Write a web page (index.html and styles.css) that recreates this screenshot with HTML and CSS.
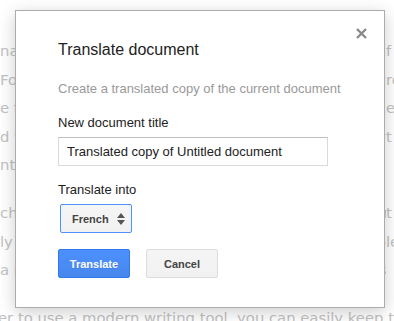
FILE: index.html
```html
<!DOCTYPE html>
<html lang="en">
<head>
  <meta charset="UTF-8">
  <title>Translate document</title>
  <link rel="stylesheet" href="styles.css">
</head>
<body>
  <!-- Document text behind the dialog -->
  <div class="doc">
    <p>
      <span class="line"><span class="start">nal document stays the same and a new copy is made. I</span><span class="end">f it</span></span>
      <span class="line"><span class="start"> For each language you pick, a copy is saved to your Drive. F</span><span class="end">rom</span></span>
      <span class="line"><span class="start">e the formatting of the original is kept in the copies, and styl</span><span class="end">es</span></span>
      <span class="line"><span class="start">d with the same headings, lists and tables in each of the new </span><span class="end">t</span></span>
      <span class="line"><span class="start">nt</span></span>
    </p>
    <p>
      <span class="line"><span class="start">ch, you can share the translated copy with your team, edit it or pri</span><span class="end">t</span></span>
      <span class="line"><span class="start">ly with comments and suggestions, just like any other fi</span><span class="end">le</span></span>
      <span class="line"><span class="start">a machine translation, so some words may need a second look.</span></span>
    </p>
    <p>
      <span class="line"><span class="start">er to use a modern writing tool, you can easily keep track of every change.</span></span>
    </p>
  </div>

  <!-- Translate dialog -->
  <div class="dialog">
    <button class="close" title="Close">
      <svg width="11" height="11" viewBox="0 0 11 11">
        <path d="M1 1 L10 10 M10 1 L1 10" stroke="#8a8a8a" stroke-width="2.4" fill="none"/>
      </svg>
    </button>
    <h2 class="title">Translate document</h2>
    <p class="subtitle">Create a translated copy of the current document</p>

    <label class="field-label" for="docTitle">New document title</label>
    <input class="text-input" type="text" id="docTitle" value="Translated copy of Untitled document">

    <label class="field-label">Translate into</label>
    <div class="select">
      <span>French</span>
      <svg width="8" height="12" viewBox="0 0 8 12">
        <path d="M4 0 L8 5 L0 5 Z M0 7 L8 7 L4 12 Z" fill="#555"/>
      </svg>
    </div>

    <div class="buttons">
      <button class="btn btn-primary">Translate</button>
      <button class="btn">Cancel</button>
    </div>
  </div>
</body>
</html>
```
FILE: styles.css
```css
/* Page */
body {
  margin: 0;
  background: #ffffff;
  overflow: hidden;
  height: 321px;
}

.doc {
  padding-top: 37px;
  font-family: 'DejaVu Sans', sans-serif;
  font-size: 14.8px;
  color: #c2c2c2;
}

.doc p {
  margin: 0 0 19px;
}

.line {
  display: grid;
  grid-template-columns: 386px 8px;
  white-space: nowrap;
  line-height: 28.6px;
}

.line .start,
.line .end {
  overflow: hidden;
}

.doc p:last-child .line {
  grid-template-columns: 396px;
  margin-left: -2px;
}

/* Dialog */
.dialog {
  position: absolute;
  left: 15px;
  top: 10px;
  width: 370px;
  height: 298px;
  box-sizing: border-box;
  padding: 30px 42px;
  background: #ffffff;
  border: 1px solid #acacac;
  box-shadow: 0 4px 16px rgba(0, 0, 0, 0.2);
  font-family: 'Liberation Sans', Arial, sans-serif;
  color: #222;
}

.close {
  position: absolute;
  right: 17px;
  top: 17px;
  padding: 0;
  border: none;
  background: none;
  cursor: pointer;
  line-height: 0;
}

.title {
  margin: 0;
  font-size: 16px;
  font-weight: normal;
  line-height: 18px;
  color: #222;
}

.subtitle {
  margin: 22px 0 0;
  font-size: 13px;
  line-height: 16px;
  color: #999;
}

.field-label {
  display: block;
  margin-top: 18px;
  font-size: 13px;
  line-height: 16px;
  color: #222;
}

.text-input {
  display: block;
  box-sizing: border-box;
  width: 270px;
  height: 29px;
  margin-top: 6px;
  padding: 0 8px;
  border: 1px solid #d9d9d9;
  border-top-color: #c0c0c0;
  font-family: 'Liberation Sans', Arial, sans-serif;
  font-size: 13px;
  color: #222;
}

.text-input + .field-label {
  margin-top: 16px;
}

.select {
  display: flex;
  align-items: center;
  justify-content: space-between;
  box-sizing: border-box;
  width: 72px;
  height: 29px;
  margin: 6px 0 0 2px;
  padding: 0 6px 0 11px;
  border: 1px solid #4d90fe;
  border-radius: 2px;
  background: linear-gradient(#f5f5f5, #f1f1f1);
  font-size: 11px;
  font-weight: bold;
  color: #444;
}

.buttons {
  display: flex;
  gap: 16px;
  margin-top: 16px;
}

.btn {
  box-sizing: border-box;
  width: 72px;
  height: 29px;
  padding: 0;
  border: 1px solid #dcdcdc;
  border-radius: 2px;
  background: linear-gradient(#f5f5f5, #f1f1f1);
  font-family: 'Liberation Sans', Arial, sans-serif;
  font-size: 11px;
  font-weight: bold;
  color: #444;
  cursor: pointer;
}

.btn-primary {
  border-color: #3079ed;
  background: linear-gradient(#4d90fe, #4787ed);
  color: #ffffff;
  text-shadow: 0 1px rgba(0, 0, 0, 0.1);
}
```
